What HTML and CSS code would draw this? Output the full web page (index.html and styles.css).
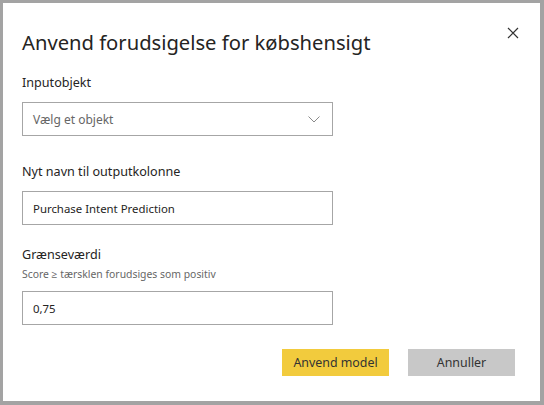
FILE: index.html
```html
<!DOCTYPE html>
<html lang="da">
<head>
<meta charset="utf-8">
<link rel="stylesheet" href="styles.css">
</head>
<body>
<div class="dialog">
  <div class="header">
    <h1 class="title">Anvend forudsigelse for købshensigt</h1>
    <button class="close" aria-label="Luk">
      <svg width="12" height="12" viewBox="0 0 12 12"><path d="M1 1L11 11M11 1L1 11" stroke="#333" stroke-width="1.2" fill="none"/></svg>
    </button>
  </div>
  <div class="field first">
    <div class="label">Inputobjekt</div>
    <div class="box select">
      <span class="placeholder">Vælg et objekt</span>
      <svg class="chev" width="12" height="7" viewBox="0 0 12 7"><path d="M0.5 0.5L6 6L11.5 0.5" stroke="#8a8a8a" stroke-width="1" fill="none"/></svg>
    </div>
  </div>
  <div class="field">
    <div class="label">Nyt navn til outputkolonne</div>
    <div class="box"><span class="value">Purchase Intent Prediction</span></div>
  </div>
  <div class="field threshold">
    <div class="label">Grænseværdi</div>
    <div class="hint">Score ≥ tærsklen forudsiges som positiv</div>
    <div class="box"><span class="value">0,75</span></div>
  </div>
  <div class="actions">
    <button class="btn primary">Anvend model</button>
    <button class="btn secondary">Annuller</button>
  </div>
</div>
</body>
</html>
```
FILE: styles.css
```css
html, body {
  margin: 0;
  padding: 0;
}
body {
  background: #a3a3a3;
  width: 544px;
  height: 405px;
  overflow: hidden;
  font-family: "Noto Sans", "Open Sans", sans-serif;
  color: #252423;
}
.dialog {
  margin: 3px 4px 4px 3px;
  height: 398px;
  background: #fff;
  box-sizing: border-box;
  padding: 24px 0 0 19px;
}
.header {
  display: flex;
  justify-content: space-between;
  align-items: flex-start;
}
.title {
  margin: 0;
  font-weight: 400;
  font-size: 20.2px;
  line-height: 30px;
  color: #252423;
}
.close {
  border: 0;
  background: none;
  padding: 0;
  margin: 0 21px 0 0;
  width: 12px;
  height: 12px;
  display: flex;
}
.field {
  width: 311px;
  margin-top: 26px;
}
.field.first {
  margin-top: 16px;
}
.field.threshold {
  margin-top: 20px;
}
.label {
  font-size: 12.6px;
  line-height: 20px;
  margin-bottom: 9px;
}
.hint {
  font-size: 10.4px;
  line-height: 16px;
  color: #666;
  margin-top: -8px;
  margin-bottom: 9px;
}
.box {
  height: 34px;
  box-sizing: border-box;
  border: 1px solid #a6a6a6;
  display: flex;
  align-items: center;
  padding: 0 12px 0 10px;
  font-size: 11.4px;
}
.select {
  justify-content: space-between;
}
.placeholder {
  color: #666;
  font-size: 12px;
}
.value {
  color: #252423;
}
.actions {
  display: flex;
  justify-content: flex-end;
  gap: 19px;
  padding-right: 25px;
  margin-top: 24px;
}
.btn {
  width: 107px;
  height: 27px;
  border: 0;
  font-family: inherit;
  font-size: 12.4px;
  color: #333;
  padding: 0;
}
.primary {
  background: #f2cb3d;
}
.secondary {
  background: #c8c8c8;
}
```
